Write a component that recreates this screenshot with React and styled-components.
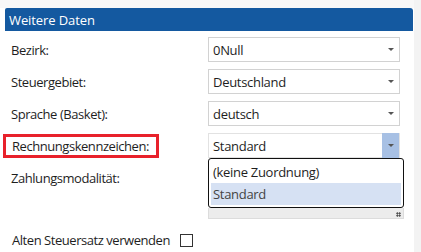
import React from 'react';
import styled, { createGlobalStyle } from 'styled-components';

const GlobalStyle = createGlobalStyle`
  html, body {
    margin: 0;
    padding: 0;
    background: #f3f3f3;
  }
  body {
    font-family: 'Open Sans', 'Noto Sans', sans-serif;
    font-size: 13px;
    color: #1e1e1e;
  }
`

// ganze seite
const Page = styled.div`
  width: 414px;
  height: 252px;
  box-sizing: border-box;
  padding: 8px 0 0 5px;
  position: relative;
  background: linear-gradient(#f8f8f8 0 8px, #ffffff 8px);
`

const Header = styled.div`
  height: 23px;
  width: 408px;
  background: #1459a0;
  color: #ffffff;
  border-radius: 2px 3px 0 0;
  padding-left: 4px;
  box-sizing: border-box;
  display: flex;
  align-items: center;
  font-size: 13px;
  letter-spacing: -0.1px;
`

const Form = styled.div`
  display: grid;
  grid-template-columns: 203px 192px;
  grid-auto-rows: 25px;
  row-gap: 7px;
  padding-top: 6px;
`

const Label = styled.div`
  display: flex;
  align-items: center;
  padding-left: 6px;
  letter-spacing: -0.45px;
  white-space: nowrap;
`

const Marked = styled.span`
  margin-left: -8px;
  padding: 0 7px 0 6px;
  height: 18px;
  display: flex;
  align-items: center;
  border: 3px solid #e8212b;
  margin-top: 1px;
`

const SelectBox = styled.div`
  position: relative;
  border: 1px solid ${p => (p.$open ? '#e2e2e2' : '#d2d2d2')};
  background: #fff;
  display: flex;
  align-items: center;
  padding-left: 4px;
  box-sizing: border-box;
  letter-spacing: -0.3px;
`

const Arrow = styled.div`
  position: absolute;
  right: 0;
  top: -1px;
  bottom: -1px;
  width: 17px;
  background: ${p => (p.$open ? '#a7c0e4' : 'transparent')};
  display: flex;
  align-items: center;
  justify-content: center;

  &::after {
    content: '';
    border-left: 3px solid transparent;
    border-right: 3px solid transparent;
    border-top: 3px solid #555;
  }
`

const Popup = styled.div`
  position: absolute;
  top: 24px;
  left: -1px;
  width: 196px;
  z-index: 2;
`

const List = styled.div`
  border: 1px solid #111;
  border-radius: 3px;
  background: #fff;
  padding: 1px 2px 2px 2px;
`

const Item = styled.div`
  height: ${p => (p.$selected ? '22px' : '23px')};
  display: flex;
  align-items: center;
  padding-left: 2px;
  background: ${p => (p.$selected ? '#d6e1f3' : '#fff')};
  color: ${p => (p.$selected ? '#444' : '#1e1e1e')};
`

const Grip = styled.div`
  height: 10px;
  background: #ececec;
  border: 1px solid #dcdcdc;
  border-top: 0;
  position: relative;

  &::after {
    content: '';
    position: absolute;
    right: 2px;
    bottom: 1px;
    width: 5px;
    height: 5px;
    background:
      radial-gradient(circle, #333 0.8px, transparent 1px) 0 0 / 2.5px 2.5px;
  }
`

const CheckRow = styled.div`
  display: flex;
  align-items: center;
  gap: 10px;
  padding-left: 7px;
  margin-top: 37px;
  height: 25px;
  letter-spacing: -0.45px;
`

const Box = styled.div`
  width: 11px;
  height: 11px;
  border: 1px solid #333;
  margin-top: 1px;
`

const fields = [
  { label: 'Bezirk:', value: '0Null' },
  { label: 'Steuergebiet:', value: 'Deutschland' },
  { label: 'Sprache (Basket):', value: 'deutsch' },
]

export default function App() {
  return (
    <>
      <GlobalStyle />
      <Page>
        <Header>Weitere Daten</Header>
        <Form>
          {fields.map(f => (
            <React.Fragment key={f.label}>
              <Label>{f.label}</Label>
              <SelectBox>
                {f.value}
                <Arrow />
              </SelectBox>
            </React.Fragment>
          ))}

          <Label>
            <Marked>Rechnungskennzeichen:</Marked>
          </Label>
          <SelectBox $open>
            Standard
            <Arrow $open />
            <Popup>
              <List>
                <Item>(keine Zuordnung)</Item>
                <Item $selected>Standard</Item>
              </List>
              <Grip />
            </Popup>
          </SelectBox>

          <Label>Zahlungsmodalität:</Label>
          <div />
        </Form>
        <CheckRow>
          Alten Steuersatz verwenden
          <Box />
        </CheckRow>
      </Page>
    </>
  );
}
